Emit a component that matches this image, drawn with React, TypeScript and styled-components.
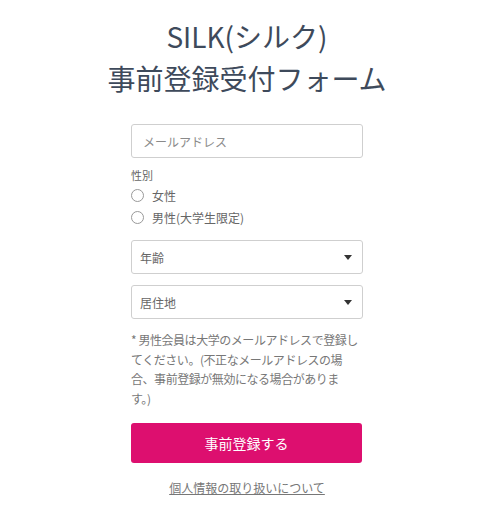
import React, { useState } from "react";
import styled, { createGlobalStyle } from "styled-components";

const GlobalStyle = createGlobalStyle`
  html, body {
    margin: 0;
    padding: 0;
    background: #ffffff;
  }
  body {
    font-family: "Noto Sans CJK JP", "Noto Sans", sans-serif;
    color: #555;
  }
  * {
    box-sizing: border-box;
  }
`;

const App = () => {
  const [gender, setGender] = useState("");

  return (
    <Main>
      <GlobalStyle />
      <Title>
        <TitleLine>SILK(シルク)</TitleLine>
        <TitleLine>事前登録受付フォーム</TitleLine>
      </Title>
      <Form>
        <TextInput placeholder="メールアドレス" />
        <FieldLabel>性別</FieldLabel>
        <RadioRow onClick={() => setGender("f")}>
          <RadioCircle checked={gender === "f"} />
          <RadioText>女性</RadioText>
        </RadioRow>
        <RadioRow onClick={() => setGender("m")}>
          <RadioCircle checked={gender === "m"} />
          <RadioText>男性(大学生限定)</RadioText>
        </RadioRow>
        <SelectBox top="12px">
          <span>年齢</span>
          <Caret />
        </SelectBox>
        <SelectBox top="11px">
          <span>居住地</span>
          <Caret />
        </SelectBox>
        <Note>
          * 男性会員は大学のメールアドレスで登録してください。(不正なメールアドレスの場合、事前登録が無効になる場合がありま
          <br />
          す。)
        </Note>
        <SubmitButton>事前登録する</SubmitButton>
        <PolicyLink>個人情報の取り扱いについて</PolicyLink>
      </Form>
    </Main>
  );
};

export default App;

const Main = styled.div`
  width: 494px;
  height: 510px;
  padding-top: 15px;
  display: flex;
  flex-direction: column;
  align-items: center;
`;

const Title = styled.h1`
  margin: 0;
  display: flex;
  flex-direction: column;
  align-items: center;
  color: #3e4a5b;
  font-weight: 400;
  font-size: 28px;
  line-height: 42px;
`;

const TitleLine = styled.div``;

const Form = styled.div`
  width: 232px;
  margin-top: 25px;
  display: flex;
  flex-direction: column;
`;

const TextInput = styled.input`
  width: 100%;
  height: 34px;
  border: 1px solid #cfcfcf;
  border-radius: 3px;
  padding: 0 11px;
  font-family: inherit;
  font-size: 12px;
  color: #555;
  outline: none;
  &::placeholder {
    color: #8a8a8a;
  }
`;

const FieldLabel = styled.div`
  margin-top: 9px;
  margin-bottom: 1px;
  font-size: 11px;
  line-height: 16px;
  color: #666;
`;

const RadioRow = styled.div`
  display: flex;
  align-items: center;
  height: 22px;
  cursor: pointer;
`;

const RadioCircle = styled.span<{ checked: boolean }>`
  width: 13px;
  height: 13px;
  border-radius: 50%;
  border: 1px solid #999;
  background: ${(p) => (p.checked ? "#555" : "#fff")};
  box-shadow: ${(p) => (p.checked ? "inset 0 0 0 2px #fff" : "none")};
`;

const RadioText = styled.span`
  margin-left: 8px;
  font-size: 12px;
  color: #666;
`;

const SelectBox = styled.div<{ top: string }>`
  margin-top: ${(p) => p.top};
  height: 34px;
  border: 1px solid #cfcfcf;
  border-radius: 3px;
  padding: 0 10px 0 8px;
  display: flex;
  align-items: center;
  justify-content: space-between;
  font-size: 12px;
  color: #666;
`;

const Caret = styled.span`
  width: 0;
  height: 0;
  border-left: 4px solid transparent;
  border-right: 4px solid transparent;
  border-top: 5px solid #333;
`;

const Note = styled.p`
  margin: 11px 0 0;
  font-size: 12px;
  line-height: 19.5px;
  letter-spacing: -0.45px;
  color: #777;
`;

const SubmitButton = styled.button`
  margin-top: 15px;
  height: 40px;
  width: 231px;
  border: none;
  border-radius: 3px;
  background: #dd0f6f;
  color: #fff;
  font-family: inherit;
  font-size: 14px;
  cursor: pointer;
`;

const PolicyLink = styled.a`
  margin-top: 16px;
  align-self: center;
  font-size: 12px;
  color: #777;
  text-decoration: underline;
  cursor: pointer;
`;
